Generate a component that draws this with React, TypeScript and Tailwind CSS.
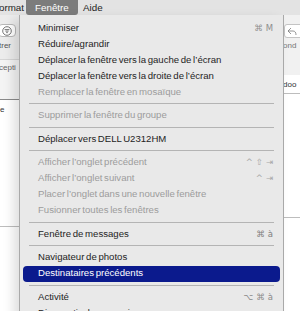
import React from "react";

type Item =
  | { type: "sep" }
  | { type: "item"; label: string; disabled?: boolean; shortcut?: string[]; scColor?: string; active?: boolean };

const items: Item[] = [
  { type: "item", label: "Minimiser", shortcut: ["⌘", "M"], scColor: "text-[#8e8e8e]" },
  { type: "item", label: "Réduire/agrandir" },
  { type: "item", label: "Déplacer la fenêtre vers la gauche de l’écran" },
  { type: "item", label: "Déplacer la fenêtre vers la droite de l’écran" },
  { type: "item", label: "Remplacer la fenêtre en mosaïque", disabled: true },
  { type: "sep" },
  { type: "item", label: "Supprimer la fenêtre du groupe", disabled: true },
  { type: "sep" },
  { type: "item", label: "Déplacer vers DELL U2312HM" },
  { type: "sep" },
  { type: "item", label: "Afficher l’onglet précédent", disabled: true, shortcut: ["^", "⇧", "⇥"], scColor: "text-[#a8a8a8]" },
  { type: "item", label: "Afficher l’onglet suivant", disabled: true, shortcut: ["^", "⇥"], scColor: "text-[#a8a8a8]" },
  { type: "item", label: "Placer l’onglet dans une nouvelle fenêtre", disabled: true },
  { type: "item", label: "Fusionner toutes les fenêtres", disabled: true },
  { type: "sep" },
  { type: "item", label: "Fenêtre de messages", shortcut: ["⌘", "à"], scColor: "text-[#7e7e7e]" },
  { type: "sep" },
  { type: "item", label: "Navigateur de photos" },
  { type: "item", label: "Destinataires précédents", active: true },
  { type: "sep" },
  { type: "item", label: "Activité", shortcut: ["⌥", "⌘", "à"], scColor: "text-[#8a8a8a]" },
  { type: "item", label: "Diagnostic de connexion" },
];

function FilterIcon() {
  return (
    <svg width="10" height="10" viewBox="0 0 10 10" fill="none" stroke="#555" strokeWidth="0.8">
      <circle cx="5" cy="5" r="4.3" />
      <line x1="2.6" y1="3.6" x2="7.4" y2="3.6" />
      <line x1="3.4" y1="5.1" x2="6.6" y2="5.1" />
      <line x1="4.2" y1="6.6" x2="5.8" y2="6.6" />
    </svg>
  );
}

function ReplyIcon() {
  return (
    <svg width="10" height="9" viewBox="0 0 10 9" fill="none" stroke="#7a7a7a" strokeWidth="0.8">
      <path d="M4 1 L1 4 L4 7 M1 4 H6 C8 4 9 5.5 9 8" />
    </svg>
  );
}

export default function App() {
  return (
    <div className="w-[300px] h-[311px] relative overflow-hidden bg-white font-['Liberation_Sans','DejaVu_Sans',sans-serif] text-[#1e1e1e]">
      {/* menu bar */}
      <div className="h-[15px] flex items-center bg-[#e3e3e3] text-[9.8px] leading-none">
        <div className="w-[27px] -ml-[1px]">ormat</div>
        <div className="h-[15px] w-[52px] flex items-center pl-[9px] bg-[#7c7c7c] text-white rounded-b-[3px]">Fenêtre</div>
        <div className="pl-[5px]">Aide</div>
      </div>

      {/* background window */}
      <div className="flex h-[296px]">
        <div className="w-[19px] flex flex-col bg-[#ececec]">
          <div className="h-[9px]" />
          <div className="h-[13px] w-[18px] -ml-[2px] border border-[#b8b8b8] bg-white rounded-[4px] flex items-center justify-center">
            <FilterIcon />
          </div>
          <div className="text-[8px] text-[#555] mt-[5px] -ml-[1px] leading-none">trer</div>
          <div className="h-[40px] mt-[9px] bg-[#f4f4f4] border-t border-[#d6d6d6] text-[8px] text-[#666] pt-[4px] leading-none -ml-[1px]">cepti</div>
          <div className="flex-1 bg-white flex flex-col">
            <div className="h-[1px] bg-[#8a8a8a]" />
            <div className="text-[8px] text-[#333] mt-[6px] leading-none">e</div>
            <div className="h-[112px]" />
            <div className="h-[1px] bg-[#bdbdbd]" />
          </div>
        </div>
        <div className="flex-1" />
        <div className="w-[17px] flex flex-col bg-[#f1f1f1]">
          <div className="h-[9px]" />
          <div className="h-[14px] w-[20px] ml-[1px] border border-[#c4c4c4] bg-white rounded-[3px] flex items-center pl-[2px]">
            <ReplyIcon />
          </div>
          <div className="text-[8px] text-[#777] mt-[4px] leading-none">ond</div>
          <div className="h-[25px] bg-[#f1f1f1]" />
          <div className="flex-1 bg-white flex flex-col">
            <div className="text-[8px] text-[#333] mt-[6px] leading-none">doo</div>
            <div className="h-[1px] bg-[#bdbdbd] mt-[4px]" />
            <div className="h-[123px]" />
            <div className="h-[1px] bg-[#bdbdbd]" />
          </div>
        </div>
      </div>

      {/* dropdown menu */}
      <div className="absolute left-[19px] top-[15px] w-[265px] h-[310px] bg-[#e9e9e9] border-x border-[#a9a9a9] shadow-[-6px_4px_10px_rgba(0,0,0,0.12)] pt-[5px] px-[2px] text-[9.6px] [word-spacing:-1px]">
        {items.map((it, i) =>
          it.type === "sep" ? (
            <div key={i} className="h-[7.5px] flex items-center px-[7px]">
              <div className="h-[1px] w-full bg-[#b4b4b4]" />
            </div>
          ) : (
            <div
              key={i}
              className={
                "h-[16px] flex items-center pl-[15px] pr-[7px] mx-[1px] rounded-[4px] " +
                (it.active ? "bg-[#0b1a8d] text-white" : it.disabled ? "text-[#9c9c9c]" : "text-[#1e1e1e]")
              }
            >
              <span className="flex-1 whitespace-nowrap">{it.label}</span>
              {it.shortcut && (
                <span className={"flex gap-[3px] font-['DejaVu_Sans',sans-serif] text-[8.5px] [word-spacing:0px] " + (it.scColor ?? "")}>
                  {it.shortcut.map((s, j) => (
                    <span key={j}>{s}</span>
                  ))}
                </span>
              )}
            </div>
          )
        )}
      </div>
    </div>
  );
}
